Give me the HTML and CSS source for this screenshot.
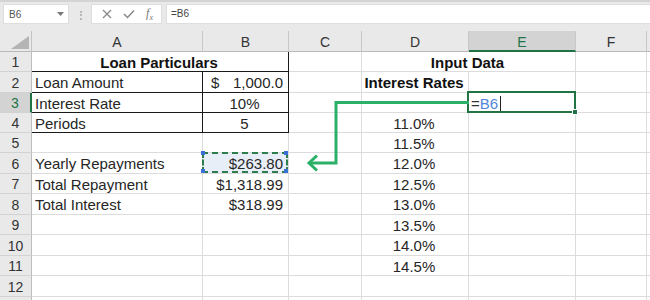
FILE: index.html
```html
<!DOCTYPE html>
<html lang="en">
<head>
    <meta charset="UTF-8">
    <title>Loan Sheet</title>
    <link rel="stylesheet" href="styles.css">
</head>
<body>
<div class="app">

    <div class="formula-bar">
        <div class="name-box">
            <span>B6</span>
            <svg width="7" height="4" viewBox="0 0 7 4"><polygon points="0,0 7,0 3.5,4" fill="#777"/></svg>
        </div>
        <div class="grip"></div>
        <div class="fx-buttons">
            <svg width="10" height="10" viewBox="0 0 10 10"><path d="M1,1 L9,9 M9,1 L1,9" stroke="#888" stroke-width="1.3"/></svg>
            <svg width="12" height="10" viewBox="0 0 12 10"><path d="M1,5 L4.5,8.5 L11,1.5" stroke="#888" stroke-width="1.5" fill="none"/></svg>
            <span class="fx"><i>f</i><sub>x</sub></span>
        </div>
        <div class="formula-input">=B6</div>
    </div>

    <div class="sheet">
        <!-- header -->
        <div class="corner"><svg width="18" height="13" viewBox="0 0 18 13"><polygon points="18,0 18,13 0,13" fill="#b4b4b4"/></svg></div>
        <div class="h">A</div>
        <div class="h">B</div>
        <div class="h">C</div>
        <div class="h">D</div>
        <div class="h sel">E</div>
        <div class="h">F</div>
        <div class="h"></div>

        <!-- 1 -->
        <div class="r">1</div>
        <div class="c tb span2 bold center">Loan Particulars</div>
        <div class="c"></div>
        <div class="c span2 bold center">Input Data</div>
        <div class="c"></div>
        <div class="c"></div>

        <!-- 2 -->
        <div class="r">2</div>
        <div class="c tb">Loan Amount</div>
        <div class="c tb acct"><span>$</span><span>1,000.0</span></div>
        <div class="c"></div>
        <div class="c bold center">Interest Rates</div>
        <div class="c"></div>
        <div class="c"></div>
        <div class="c"></div>

        <!-- 3 -->
        <div class="r sel">3</div>
        <div class="c tb">Interest Rate</div>
        <div class="c tb center">10%</div>
        <div class="c"></div>
        <div class="c"></div>
        <div class="c active"><span class="eq">=</span><span class="ref">B6</span><span class="cursor"></span></div>
        <div class="c"></div>
        <div class="c"></div>

        <!-- 4 -->
        <div class="r">4</div>
        <div class="c tb">Periods</div>
        <div class="c tb center">5</div>
        <div class="c"></div>
        <div class="c center">11.0%</div>
        <div class="c"></div>
        <div class="c"></div>
        <div class="c"></div>

        <!-- 5 -->
        <div class="r">5</div>
        <div class="c"></div>
        <div class="c"></div>
        <div class="c"></div>
        <div class="c center">11.5%</div>
        <div class="c"></div>
        <div class="c"></div>
        <div class="c"></div>

        <!-- 6 -->
        <div class="r">6</div>
        <div class="c">Yearly Repayments</div>
        <div class="c right referenced">$263.80<i class="handles"></i></div>
        <div class="c"></div>
        <div class="c center">12.0%</div>
        <div class="c"></div>
        <div class="c"></div>
        <div class="c"></div>

        <!-- 7 -->
        <div class="r">7</div>
        <div class="c">Total Repayment</div>
        <div class="c right">$1,318.99</div>
        <div class="c"></div>
        <div class="c center">12.5%</div>
        <div class="c"></div>
        <div class="c"></div>
        <div class="c"></div>

        <!-- 8 -->
        <div class="r">8</div>
        <div class="c">Total Interest</div>
        <div class="c right">$318.99</div>
        <div class="c"></div>
        <div class="c center">13.0%</div>
        <div class="c"></div>
        <div class="c"></div>
        <div class="c"></div>

        <!-- 9 -->
        <div class="r">9</div>
        <div class="c"></div>
        <div class="c"></div>
        <div class="c"></div>
        <div class="c center">13.5%</div>
        <div class="c"></div>
        <div class="c"></div>
        <div class="c"></div>

        <!-- 10 -->
        <div class="r">10</div>
        <div class="c"></div>
        <div class="c"></div>
        <div class="c"></div>
        <div class="c center">14.0%</div>
        <div class="c"></div>
        <div class="c"></div>
        <div class="c"></div>

        <!-- 11 -->
        <div class="r">11</div>
        <div class="c"></div>
        <div class="c"></div>
        <div class="c"></div>
        <div class="c center">14.5%</div>
        <div class="c"></div>
        <div class="c"></div>
        <div class="c"></div>

        <!-- 12 -->
        <div class="r">12</div>
        <div class="c"></div>
        <div class="c"></div>
        <div class="c"></div>
        <div class="c"></div>
        <div class="c"></div>
        <div class="c"></div>
        <div class="c"></div>

        <!-- 13 (cut off by the window) -->
        <div class="r"></div>
        <div class="c"></div>
        <div class="c"></div>
        <div class="c"></div>
        <div class="c"></div>
        <div class="c"></div>
        <div class="c"></div>
        <div class="c"></div>
    </div>

    <!-- arrow from E3 back to B6 -->
    <svg class="arrow" viewBox="0 0 650 300" width="650" height="300">
        <path d="M469,102.5 H336 V163 H309" stroke="#2bb067" stroke-width="3" fill="none"/>
        <path d="M317,155.5 L309,163 L317,170.5" stroke="#2bb067" stroke-width="3" fill="none"/>
    </svg>
</div>
</body>
</html>
```

FILE: styles.css
```css
body {
    margin: 0;
    padding: 0;
    font-family: 'Liberation Sans', Arial, sans-serif;
    background: #fff;
    color: #222;
}

.app {
    position: relative;
    width: 650px;
    height: 300px;
    overflow: hidden;
}

/* Formula bar */
.formula-bar {
    height: 31px;
    box-sizing: border-box;
    display: flex;
    align-items: flex-start;
    padding: 2px 0 0 3px;
    background: #e9e9e9;
    border-top: 2px solid #d3d3d3;
}

.name-box,
.fx-buttons,
.formula-input {
    height: 20px;
    box-sizing: border-box;
    background: #fff;
    border: 1px solid #dedede;
}

.name-box {
    width: 66px;
    display: flex;
    align-items: center;
    justify-content: space-between;
    padding: 0 4px 0 5px;
    font-size: 10px;
    color: #555;
}

.grip {
    width: 0;
    height: 9px;
    margin: 7px 9px 0 11px;
    border-left: 2px dotted #b8b8b8;
}

.fx-buttons {
    width: 71px;
    display: flex;
    align-items: center;
    justify-content: space-between;
    padding: 0 8px 0 10px;
}

.fx {
    font-family: 'Liberation Serif', serif;
    font-size: 12px;
    color: #777;
}

.fx sub {
    font-size: 8px;
    font-style: italic;
}

.formula-input {
    flex: 1;
    margin-left: 4px;
    border-right: none;
    padding-left: 4px;
    font-size: 10px;
    line-height: 18px;
    color: #444;
}

/* Sheet grid */
.sheet {
    display: grid;
    grid-template-columns: 32px 171px 86px 73px 107px 107px 71px 1fr;
    grid-template-rows: 21px 20px 21px 20px 20px 20px 21px 20px 21px 20px 21px 20px 21px 20px;
    font-size: 15px;
}

.corner,
.h,
.r,
.c {
    box-sizing: border-box;
    display: flex;
    align-items: center;
    white-space: nowrap;
}

.corner {
    background: #e9e9e9;
    border-right: 1px solid #c4c4c4;
    border-bottom: 1px solid #b9b9b9;
    justify-content: flex-end;
    align-items: flex-end;
    padding: 0 2px 2px 0;
}

.h {
    justify-content: center;
    background: #e9e9e9;
    color: #333;
    font-size: 14px;
    padding-top: 2px;
    border-right: 1px solid #c8c8c8;
    border-bottom: 1px solid #b9b9b9;
}

.h.sel {
    background: #d3d3d3;
    color: #217346;
    border-bottom: 2px solid #217346;
}

.r {
    justify-content: center;
    background: #e9e9e9;
    color: #333;
    font-size: 14px;
    padding-top: 1px;
    border-right: 1px solid #bdbdbd;
    border-bottom: 1px solid #d2d2d2;
}

.r.sel {
    background: #d3d3d3;
    color: #217346;
    border-right: 2px solid #217346;
}

.c {
    padding: 1px 5px 0 3px;
    border-right: 1px solid #dcdcdc;
    border-bottom: 1px solid #dcdcdc;
    color: #262626;
}

.c.tb {
    border-right-color: #1a1a1a;
    border-bottom-color: #1a1a1a;
}

.span2 {
    grid-column: span 2;
}

.bold {
    font-weight: bold;
    color: #111;
}

.center {
    justify-content: center;
}

.right {
    justify-content: flex-end;
}

.acct {
    justify-content: space-between;
    padding-left: 8px;
}

/* Active cell E3 */
.active {
    position: relative;
    padding-left: 2px;
}

.active::after {
    content: "";
    position: absolute;
    top: -2px;
    left: -2px;
    right: -1px;
    bottom: -1px;
    border: 2px solid #217346;
}

.active::before {
    content: "";
    position: absolute;
    right: -3px;
    bottom: -3px;
    width: 4px;
    height: 4px;
    background: #217346;
    border: 1px solid #fff;
    z-index: 1;
}

.eq {
    color: #333;
}

.ref {
    color: #4f86d9;
}

.cursor {
    width: 1px;
    height: 15px;
    margin-left: 2px;
    background: #222;
}

/* Referenced cell B6 */
.referenced {
    position: relative;
    background: #e8eef8;
}

.referenced::after {
    content: "";
    position: absolute;
    top: -1px;
    left: -1px;
    right: 0;
    bottom: 0;
    border: 2px dashed #2e7d4f;
}

.handles {
    position: absolute;
    top: -2px;
    left: -2px;
    width: 4px;
    height: 4px;
    background: #3a6fd6;
    box-shadow: 83px 0 #3a6fd6, 0 18px #3a6fd6, 83px 18px #3a6fd6;
    z-index: 1;
}

.arrow {
    position: absolute;
    top: 0;
    left: 0;
    pointer-events: none;
}
```
